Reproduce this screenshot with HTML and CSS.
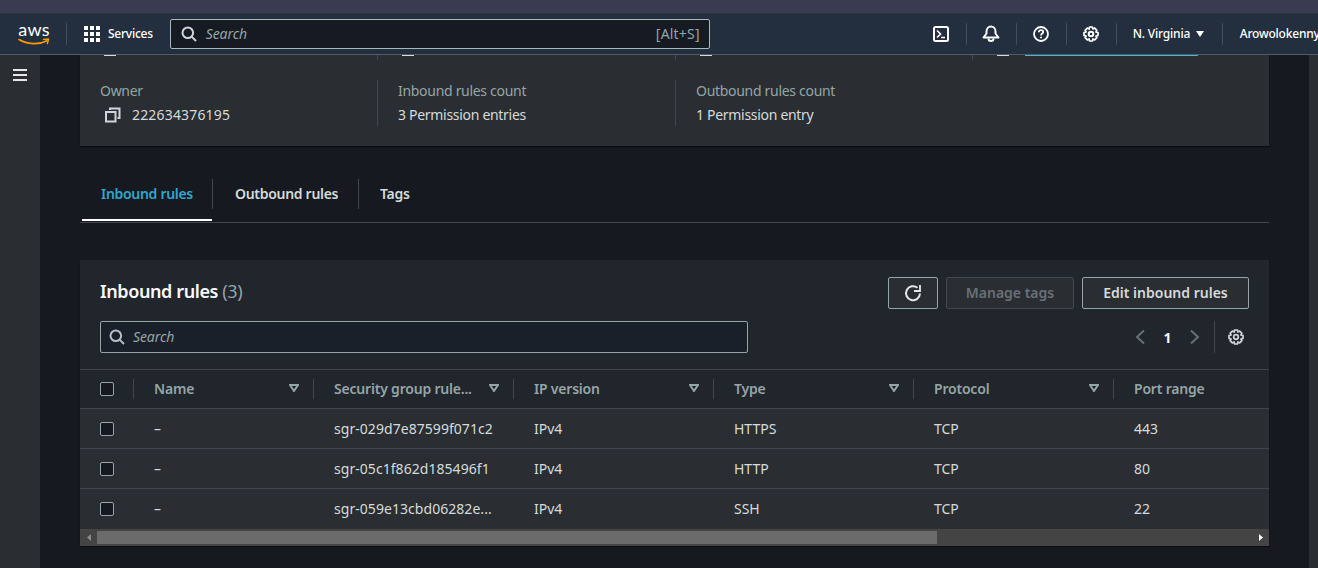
FILE: index.html
```html
<!DOCTYPE html>
<html lang="en">
<head>
    <meta charset="UTF-8">
    <meta name="viewport" content="width=device-width, initial-scale=1.0">
    <title>Security Groups</title>
    <link rel="stylesheet" href="styles.css">
</head>
<body>
    <div class="browser-strip"></div>

    <header class="topnav">
        <div class="logo">
            <span class="logo-text">aws</span>
            <svg class="logo-smile" width="32" height="8" viewBox="0 0 32 8" fill="none">
                <path d="M1 1.5C9 6.5 21 7 29 2.8" stroke="#ff9900" stroke-width="1.6" stroke-linecap="round"/>
                <path d="M25.5 1.4L30.6 1L29.4 5.6" stroke="#ff9900" stroke-width="1.4" stroke-linecap="round" stroke-linejoin="round"/>
            </svg>
        </div>
        <div class="services">
            <svg width="16" height="16" viewBox="0 0 16 16" fill="#fff">
                <rect x="0" y="0" width="4" height="4"/><rect x="6" y="0" width="4" height="4"/><rect x="12" y="0" width="4" height="4"/>
                <rect x="0" y="6" width="4" height="4"/><rect x="6" y="6" width="4" height="4"/><rect x="12" y="6" width="4" height="4"/>
                <rect x="0" y="12" width="4" height="4"/><rect x="6" y="12" width="4" height="4"/><rect x="12" y="12" width="4" height="4"/>
            </svg>
            <span>Services</span>
        </div>
        <div class="nav-search">
            <svg width="16" height="16" viewBox="0 0 16 16" fill="none" stroke="#d1d5db" stroke-width="2">
                <circle cx="6.8" cy="6.8" r="5.3"/><path d="M10.6 10.6L15 15"/>
            </svg>
            <span class="placeholder">Search</span>
            <span class="shortcut">[Alt+S]</span>
        </div>
        <div class="nav-icon">
            <svg width="16" height="16" viewBox="0 0 16 16" fill="none" stroke="#fff" stroke-width="2">
                <rect x="1" y="1" width="14" height="14" rx="1.5"/>
                <path d="M4 4.5L7.5 8L4 11.5" stroke-width="1.6"/><path d="M8 11.5H12" stroke-width="1.6"/>
            </svg>
        </div>
        <div class="nav-icon">
            <svg width="18" height="17" viewBox="0 0 18 17" fill="none" stroke="#fff" stroke-width="2" stroke-linejoin="round">
                <path d="M1.5 12.5H16.5L13.5 8.5V6.5C13.5 3.5 11.5 1.5 9 1.5C6.5 1.5 4.5 3.5 4.5 6.5V8.5Z"/>
                <path d="M6.5 13.5C6.5 15 7.5 16 9 16C10.5 16 11.5 15 11.5 13.5"/>
            </svg>
        </div>
        <div class="nav-icon">
            <svg width="16" height="16" viewBox="0 0 16 16" fill="none" stroke="#fff" stroke-width="1.8">
                <circle cx="8" cy="8" r="7"/>
                <path d="M5.8 6.2C5.8 4.9 6.8 4.2 8 4.2C9.2 4.2 10.2 4.9 10.2 6.1C10.2 7.6 8 7.6 8 9.4"/>
                <path d="M8 10.7V12.2"/>
            </svg>
        </div>
        <div class="nav-icon">
            <svg width="16" height="16" viewBox="0 0 16 16" fill="none" stroke="#fff" stroke-width="2">
                <circle cx="8" cy="8" r="2.3"/>
                <path d="M6.6 1H9.4L9.9 3L11.7 2.1L13.9 4.3L12.9 6L15 6.6V9.4L12.9 10L13.9 11.7L11.7 13.9L9.9 12.9L9.4 15H6.6L6.1 12.9L4.3 13.9L2.1 11.7L3.1 10L1 9.4V6.6L3.1 6L2.1 4.3L4.3 2.1L6.1 3Z" stroke-linejoin="round" stroke-width="1.7"/>
            </svg>
        </div>
        <div class="region">
            <span>N. Virginia</span>
            <svg width="8" height="6" viewBox="0 0 8 6" fill="#fff"><path d="M0 0H8L4 6Z"/></svg>
        </div>
        <div class="account">Arowolokenny</div>
    </header>

    <div class="layout">
        <aside class="rail">
            <svg width="14" height="12" viewBox="0 0 14 12" fill="none" stroke="#e5e7eb" stroke-width="2">
                <path d="M0 1H14M0 6H14M0 11H14"/>
            </svg>
        </aside>

        <main class="content">
            <section class="summary">
                <!-- top row is scrolled under the header, only its last pixels show -->
                <div class="summary-row cut">
                    <div class="summary-col"><i class="cut-bit"></i></div>
                    <div class="summary-col"><i class="cut-bit"></i></div>
                    <div class="summary-col"><i class="cut-bit"></i></div>
                    <div class="summary-col"><i class="cut-bit"></i><i class="cut-link"></i></div>
                </div>
                <div class="summary-row">
                    <div class="summary-col">
                        <div class="label">Owner</div>
                        <div class="value owner">
                            <svg width="16" height="16" viewBox="0 0 16 16" fill="none" stroke="#d1d5db" stroke-width="2">
                                <rect x="1" y="5" width="9.5" height="9.5"/>
                                <path d="M5 3V1.5H14.5V11H12.5"/>
                            </svg>
                            <span>222634376195</span>
                        </div>
                    </div>
                    <div class="summary-col">
                        <div class="label">Inbound rules count</div>
                        <div class="value">3 Permission entries</div>
                    </div>
                    <div class="summary-col">
                        <div class="label">Outbound rules count</div>
                        <div class="value">1 Permission entry</div>
                    </div>
                </div>
            </section>

            <nav class="tabs">
                <a class="tab active">Inbound rules</a>
                <a class="tab">Outbound rules</a>
                <a class="tab">Tags</a>
            </nav>

            <section class="rules">
                <div class="rules-head">
                    <h2>Inbound rules <span>(3)</span></h2>
                    <div class="actions">
                        <button class="btn btn-icon">
                            <svg width="18" height="18" viewBox="0 0 18 18" fill="none" stroke="#e5e7eb" stroke-width="2">
                                <path d="M16 9.5A7 7 0 1 1 13.5 3.8"/>
                                <path d="M16 1V7H10" stroke-width="1.8"/>
                            </svg>
                        </button>
                        <button class="btn disabled">Manage tags</button>
                        <button class="btn btn-edit">Edit inbound rules</button>
                    </div>
                </div>
                <div class="rules-tools">
                    <div class="table-search">
                        <svg width="16" height="16" viewBox="0 0 16 16" fill="none" stroke="#b6bec9" stroke-width="2">
                            <circle cx="6.8" cy="6.8" r="5.3"/><path d="M10.6 10.6L15 15"/>
                        </svg>
                        <span class="placeholder">Search</span>
                    </div>
                    <div class="pager">
                        <svg width="10" height="16" viewBox="0 0 10 16" fill="none" stroke="#687078" stroke-width="2"><path d="M9 1.5L2 8L9 14.5"/></svg>
                        <b>1</b>
                        <svg width="10" height="16" viewBox="0 0 10 16" fill="none" stroke="#687078" stroke-width="2"><path d="M1 1.5L8 8L1 14.5"/></svg>
                    </div>
                    <div class="table-gear">
                        <svg width="16" height="16" viewBox="0 0 16 16" fill="none" stroke="#d1d5db" stroke-width="1.7" stroke-linejoin="round">
                            <circle cx="8" cy="8" r="2.3"/>
                            <path d="M6.6 1H9.4L9.9 3L11.7 2.1L13.9 4.3L12.9 6L15 6.6V9.4L12.9 10L13.9 11.7L11.7 13.9L9.9 12.9L9.4 15H6.6L6.1 12.9L4.3 13.9L2.1 11.7L3.1 10L1 9.4V6.6L3.1 6L2.1 4.3L4.3 2.1L6.1 3Z"/>
                        </svg>
                    </div>
                </div>

                <table class="rules-table">
                    <colgroup>
                        <col class="col-check"><col class="col-name"><col class="col-data"><col class="col-data"><col class="col-data"><col class="col-data"><col>
                    </colgroup>
                    <thead>
                        <tr>
                            <th><div class="th-in check-cell"><span class="checkbox"></span></div></th>
                            <th><div class="th-in"><span>Name</span><svg class="sort" width="10" height="8" viewBox="0 0 10 8"><path d="M1 1H9L5 7Z"/></svg></div></th>
                            <th><div class="th-in"><span>Security group rule...</span><svg class="sort" width="10" height="8" viewBox="0 0 10 8"><path d="M1 1H9L5 7Z"/></svg></div></th>
                            <th><div class="th-in"><span>IP version</span><svg class="sort" width="10" height="8" viewBox="0 0 10 8"><path d="M1 1H9L5 7Z"/></svg></div></th>
                            <th><div class="th-in"><span>Type</span><svg class="sort" width="10" height="8" viewBox="0 0 10 8"><path d="M1 1H9L5 7Z"/></svg></div></th>
                            <th><div class="th-in"><span>Protocol</span><svg class="sort" width="10" height="8" viewBox="0 0 10 8"><path d="M1 1H9L5 7Z"/></svg></div></th>
                            <th><div class="th-in last"><span>Port range</span></div></th>
                        </tr>
                    </thead>
                    <tbody>
                        <tr>
                            <td class="check-td"><span class="checkbox"></span></td>
                            <td>–</td><td class="rule-id">sgr-029d7e87599f071c2</td><td>IPv4</td><td>HTTPS</td><td>TCP</td><td>443</td>
                        </tr>
                        <tr>
                            <td class="check-td"><span class="checkbox"></span></td>
                            <td>–</td><td class="rule-id">sgr-05c1f862d185496f1</td><td>IPv4</td><td>HTTP</td><td>TCP</td><td>80</td>
                        </tr>
                        <tr>
                            <td class="check-td"><span class="checkbox"></span></td>
                            <td>–</td><td class="rule-id">sgr-059e13cbd06282e...</td><td>IPv4</td><td>SSH</td><td>TCP</td><td>22</td>
                        </tr>
                    </tbody>
                </table>

                <div class="scrollbar">
                    <div class="scroll-btn"><svg width="4" height="7" viewBox="0 0 4 7" fill="#8a8a8a"><path d="M4 0V7L0 3.5Z"/></svg></div>
                    <div class="scroll-thumb"></div>
                    <div class="scroll-btn end"><svg width="4" height="7" viewBox="0 0 4 7" fill="#fff"><path d="M0 0V7L4 3.5Z"/></svg></div>
                </div>
            </section>
        </main>

        <aside class="rail-right"></aside>
    </div>
</body>
</html>
```

FILE: styles.css
```css
* {
    box-sizing: border-box;
}

html, body {
    height: 100%;
}

body {
    display: flex;
    flex-direction: column;
    margin: 0;
    overflow: hidden;
    background-color: #16191f;
    color: #d5dbdb;
    font-family: "Noto Sans", Arial, sans-serif;
    font-size: 14px;
}

.browser-strip {
    height: 13px;
    flex: none;
    background-color: #3a3a50;
    border-bottom: 1px solid #2c3038;
    box-sizing: content-box;
}

.topnav {
    display: flex;
    align-items: center;
    flex: none;
    height: 41px;
    padding-bottom: 1px;
    overflow: hidden;
    background-color: #232f3e;
    border-bottom: 1px solid #545b64;
    color: #fff;
    white-space: nowrap;
}

.logo {
    display: flex;
    flex-direction: column;
    align-items: center;
    flex: none;
    width: 32px;
    margin-left: 18px;
}

.logo-text {
    height: 15px;
    font-family: Lato, "Noto Sans", sans-serif;
    font-size: 18px;
    line-height: 15px;
    letter-spacing: 0.2px;
}

.logo-smile {
    display: block;
    margin-top: 1px;
}

.services {
    display: flex;
    align-items: center;
    flex: none;
    gap: 8px;
    height: 22px;
    margin-left: 16px;
    padding-left: 17px;
    border-left: 1px solid #414d5c;
    font-size: 12px;
    font-weight: 500;
    letter-spacing: -0.25px;
}

.nav-search {
    display: flex;
    align-items: center;
    flex: none;
    width: 540px;
    height: 30px;
    margin-left: 17px;
    padding: 0 9px 0 10px;
    background-color: #161a23;
    border: 1px solid #aab7b8;
    border-radius: 2px;
}

.placeholder {
    margin-left: 8px;
    color: #95a5a6;
    font-size: 14px;
    font-style: italic;
    letter-spacing: -0.1px;
}

.nav-search .placeholder {
    margin-left: 9px;
}

.table-search .placeholder {
    padding-bottom: 2px;
}

.shortcut {
    margin-left: auto;
    color: #95a5a6;
    font-size: 14px;
    letter-spacing: 0.2px;
}

.nav-icon {
    display: flex;
    align-items: center;
    justify-content: center;
    flex: none;
    width: 50px;
    height: 22px;
    border-right: 1px solid #414d5c;
}

.nav-search + .nav-icon {
    margin-left: 207px;
}

.region {
    display: flex;
    align-items: center;
    flex: none;
    gap: 6px;
    width: 106px;
    height: 22px;
    padding-left: 16px;
    border-right: 1px solid #414d5c;
    font-size: 12px;
    font-weight: 500;
    letter-spacing: -0.2px;
}

.account {
    flex: none;
    margin-left: 17px;
    font-size: 12px;
    font-weight: 500;
    letter-spacing: -0.2px;
}

.layout {
    display: flex;
    flex: 1;
    min-height: 0;
}

.rail {
    flex: none;
    width: 40px;
    padding: 14px 0 0 13px;
    background-color: #2a2e33;
}

.rail svg {
    display: block;
}

.rail-right {
    flex: none;
    width: 9px;
    background-color: #2a2e33;
}

.content {
    flex: 1;
    min-width: 0;
    padding: 0 40px;
}

.summary {
    height: 91px;
    background-color: #2a2e33;
    box-shadow: 0 1px 1px #0c0e12;
}

.summary-row {
    display: flex;
}

.summary-row.cut {
    height: 5px;
    margin-bottom: 20px;
}

.summary-row.cut .summary-col {
    height: 5px;
    padding-left: 24px;
}

.cut-bit {
    display: inline-block;
    width: 12px;
    height: 1px;
    vertical-align: top;
    background-color: #d5dbdb;
}

.cut-link {
    display: inline-block;
    width: 173px;
    height: 1px;
    margin-left: 16px;
    vertical-align: top;
    background-color: #44b9d6;
}

.summary-col {
    flex: none;
    width: 298px;
    height: 46px;
    padding-left: 20px;
    border-right: 1px solid #414750;
}

.summary-col:nth-child(3) {
    width: 297px;
}

.summary-col:last-child {
    border-right: none;
}

.label {
    margin-top: 1px;
    color: #95a5a6;
    font-size: 14px;
    line-height: 20px;
    letter-spacing: -0.3px;
}

.value {
    margin-top: 4px;
    line-height: 20px;
    letter-spacing: -0.3px;
}

.owner {
    display: flex;
    align-items: center;
    gap: 11px;
    padding-left: 5px;
    letter-spacing: 0.17px;
}

.owner svg {
    display: block;
}

.tabs {
    display: flex;
    align-items: center;
    height: 55px;
    margin-top: 22px;
    padding-left: 2px;
    padding-bottom: 3px;
    border-bottom: 1px solid #414750;
}

.tab {
    position: relative;
    display: flex;
    align-items: center;
    height: 30px;
    padding: 0 0 0 21px;
    border-right: 1px solid #414750;
    color: #d5dbdb;
    font-weight: 600;
    white-space: nowrap;
    letter-spacing: -0.3px;
}

.tab:first-child {
    width: 131px;
    padding-left: 19px;
}

.tab:nth-child(2) {
    width: 146px;
    padding-left: 22px;
}

.tab:last-child {
    border-right: none;
}

.tab.active {
    color: #2ea8cf;
}

/* the white bar sits on top of the tab strip's bottom line */
.tab.active::after {
    content: "";
    position: absolute;
    left: 0;
    right: 0;
    bottom: -12px;
    height: 2px;
    background-color: #fff;
}

.rules {
    margin-top: 37px;
    background-color: #21252c;
    box-shadow: 0 1px 1px #0c0e12;
}

.rules-head {
    display: flex;
    align-items: center;
    justify-content: space-between;
    height: 49px;
    padding: 17px 20px 0;
}

h2 {
    margin: 0;
    padding-bottom: 4px;
    color: #fafafa;
    font-size: 18px;
    font-weight: 600;
    line-height: 24px;
    letter-spacing: -0.4px;
}

h2 span {
    color: #95a5a6;
    font-weight: 400;
}

.actions {
    display: flex;
    gap: 8px;
}

.btn {
    height: 32px;
    padding: 0 0 2px;
    background-color: #2a2e33;
    border: 1px solid #95a5a6;
    border-radius: 2px;
    color: #d5dbdb;
    font-family: inherit;
    font-size: 14px;
    font-weight: 600;
}

.btn-icon {
    display: flex;
    align-items: center;
    justify-content: center;
    width: 50px;
    padding: 0;
}

.btn-edit {
    width: 167px;
}

.btn.disabled {
    width: 128px;
    border-color: #414750;
    color: #687078;
}

.rules-tools {
    display: flex;
    align-items: center;
    height: 32px;
    margin-top: 12px;
    padding-left: 20px;
}

.table-search {
    display: flex;
    align-items: center;
    width: 648px;
    height: 32px;
    padding-left: 8px;
    background-color: #1a2029;
    border: 1px solid #95a5a6;
    border-radius: 2px;
}

.pager {
    display: flex;
    align-items: center;
    justify-content: space-between;
    width: 65px;
    margin-left: 387px;
}

.pager b {
    color: #fafafa;
    font-size: 14px;
    font-weight: 700;
}

.table-gear {
    display: flex;
    align-items: center;
    width: 36px;
    height: 32px;
    margin-left: 14px;
    padding-left: 13px;
    border-left: 1px solid #414750;
}

.rules-table {
    width: 100%;
    margin-top: 16px;
    border-collapse: collapse;
    table-layout: fixed;
}

.col-check {
    width: 54px;
}

.col-name {
    width: 180px;
}

.col-data {
    width: 200px;
}

th {
    height: 39px;
    padding: 0;
    border-top: 1px solid #414750;
    border-bottom: 1px solid #414750;
    text-align: left;
}

.th-in {
    display: flex;
    align-items: center;
    justify-content: space-between;
    height: 20px;
    padding: 0 14px 2px 20px;
    border-right: 1px solid #414750;
    color: #95a5a6;
    font-weight: 600;
    white-space: nowrap;
    letter-spacing: -0.2px;
}

.th-in.last {
    border-right: none;
}

.check-cell {
    padding: 0 0 0 20px;
}

.sort {
    fill: none;
    stroke: #95a5a6;
    stroke-width: 2;
}

td {
    height: 40px;
    padding: 0 0 0 20px;
    background-color: #2a2e33;
    border-bottom: 1px solid #414750;
    color: #d5dbdb;
    white-space: nowrap;
}

td.rule-id {
    letter-spacing: 0.05px;
}

tbody tr:last-child td {
    border-bottom: none;
}

td.check-td {
    padding-left: 20px;
}

.checkbox {
    display: block;
    width: 14px;
    height: 14px;
    background-color: #16191f;
    border: 1px solid #95a5a6;
    border-radius: 2px;
}

.scrollbar {
    display: flex;
    align-items: center;
    height: 17px;
    background-color: #444;
}

.scroll-btn {
    display: flex;
    align-items: center;
    justify-content: center;
    width: 17px;
    height: 17px;
}

.scroll-btn.end {
    margin-left: auto;
}

.scroll-thumb {
    width: 840px;
    height: 13px;
    background-color: #6b6b6b;
}
```
